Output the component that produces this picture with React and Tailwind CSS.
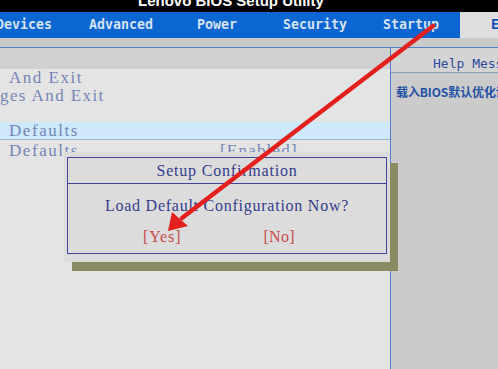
const tabs = [
  { label: 'Devices', w: 'w-[93px]' },
  { label: 'Advanced', w: 'w-[108px]' },
  { label: 'Power', w: 'w-[86px]' },
  { label: 'Security', w: 'w-[100px]' },
  { label: 'Startup', w: 'w-[77px]' },
]

const serif = "font-['Liberation_Serif',serif]"

const App = () => {
  return (
    <div className="relative w-[498px] h-[369px] overflow-hidden bg-[#e4e4e4] flex flex-col">
      {/* title */}
      <div className="h-[12px] bg-black overflow-hidden shrink-0">
        <div className="mt-[-7px] pl-[138px] leading-[15px] text-[15px] font-bold text-white font-['Liberation_Sans',sans-serif] whitespace-nowrap">
          Lenovo BIOS Setup Utility
        </div>
      </div>

      {/* menu bar */}
      <div className="h-[26px] bg-[#0b66d2] flex items-stretch shrink-0 font-['DejaVu_Sans_Mono',monospace] text-[13.3px] font-bold text-[#d6e2f2]">
        <div className="flex -ml-[4px]">
          {tabs.map((t) => (
            <div key={t.label} className={`${t.w} flex items-center whitespace-nowrap`}>
              {t.label}
            </div>
          ))}
        </div>
        <div className="flex-1 bg-[#dedede] flex items-center pl-[31px] text-[#1450b4] whitespace-nowrap overflow-hidden">
          Exit
        </div>
      </div>

      <div className="h-[9px] bg-[#c9c9c9] shrink-0" />
      <div className="h-px bg-[#5282c6] shrink-0" />

      <div className="flex flex-1 min-h-0">
        {/* left */}
        <div className="relative w-[390px] flex flex-col">
          <div className="h-[21px] bg-[#d0d0d0] shrink-0" />
          <div className={`flex-1 bg-[#e4e4e4] ${serif} text-[17px] text-[#7584b8] whitespace-nowrap`}>
            <div className="h-[18px] leading-[18px] pl-[9px] tracking-[1.5px]">And Exit</div>
            <div className="h-[18px] leading-[18px] tracking-[1.4px]">ges And Exit</div>
            <div className="h-[17px]" />
            <div className="h-[18px] leading-[17px] pl-[9px] tracking-[1.55px] bg-[#cde9fb] border-b border-[#a4b4c6]">Defaults</div>
            <div className="h-[17px] leading-[21px] pl-[9px] flex tracking-[1.55px]">
              <span>Defaults</span>
              <span className="ml-[141px] tracking-[1.2px]">[Enabled]</span>
            </div>
          </div>

          {/* dialog */}
          <div className="absolute left-[72px] top-[115px] w-[326px] h-[108px] bg-[#8b8b63]" />
          <div className="absolute left-[64px] top-[104px] w-[326px] h-[110px] bg-[#dcdcdc] pt-[5px] px-[3px]">
            <div className={`border border-[#40449a] ${serif} text-[16px] text-[#343c8c] whitespace-nowrap`}>
              <div className="h-[26px] leading-[26px] text-center tracking-[0.8px] border-b border-[#40449a]">
                Setup Confirmation
              </div>
              <div className="h-[69px] pt-[12px]">
                <div className="leading-[20px] text-center tracking-[0.75px]">
                  Load Default Configuration Now?
                </div>
                <div className="flex leading-[20px] mt-[11px] pl-[75px] text-[#c84a4a] tracking-[0.9px]">
                  <span>[Yes]</span>
                  <span className="ml-[82px] tracking-[0.3px]">[No]</span>
                </div>
              </div>
            </div>
          </div>
        </div>

        <div className="w-px bg-[#4f7fc8]" />

        {/* help panel */}
        <div className="flex-1 bg-[#cbcbcb] flex flex-col overflow-hidden whitespace-nowrap">
          <div className="h-[25px] bg-[#d4d4d4] border-b border-[#8a9cc0] pl-[42px] pt-[7px] leading-[17px] font-['DejaVu_Sans_Mono',monospace] text-[13px] text-[#2c4aa0]">
            Help Message
          </div>
          <div className="pt-[11px] pl-[5px] leading-[16px] text-[12px] tracking-[-0.1px] font-bold text-[#2350a4] font-['Noto_Sans_CJK_SC',sans-serif]">
            载入BIOS默认优化设置
          </div>
        </div>
      </div>

      {/* red arrow annotation */}
      <svg className="absolute left-0 top-0 pointer-events-none" width="498" height="369" viewBox="0 0 498 369">
        <line x1="433" y1="26" x2="182" y2="218" stroke="#e3201e" strokeWidth="4.5" strokeLinecap="round" />
        <polygon points="168,231 172,212 188,226" fill="#e3201e" />
      </svg>
    </div>
  )
}

export default App
